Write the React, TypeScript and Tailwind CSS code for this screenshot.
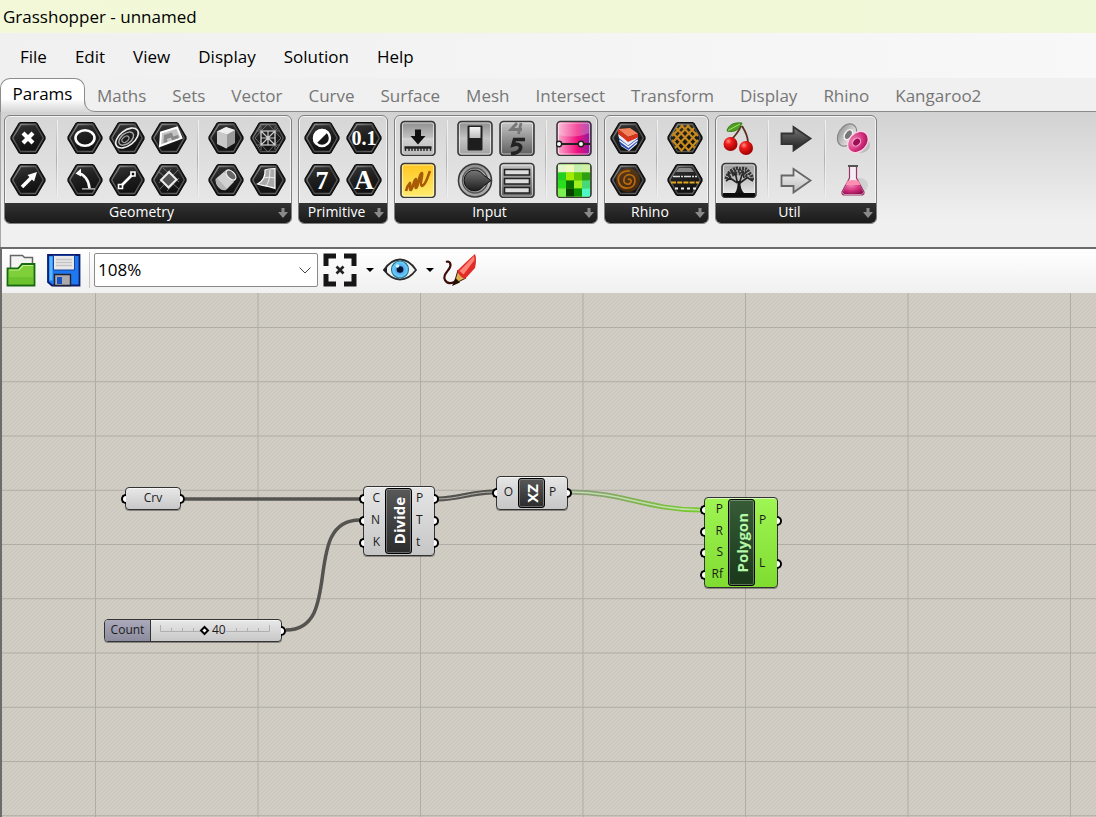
import type { ReactNode } from "react";

const menus = ["File", "Edit", "View", "Display", "Solution", "Help"];

const tabs = [
  "Maths",
  "Sets",
  "Vector",
  "Curve",
  "Surface",
  "Mesh",
  "Intersect",
  "Transform",
  "Display",
  "Rhino",
  "Kangaroo2",
];

/* ---------- icon frames ---------- */

function Svg({ children }: { children: ReactNode }) {
  return (
    <svg viewBox="0 0 36 36" className="block h-9 w-9" aria-hidden="true">
      {children}
    </svg>
  );
}

function Hex({ children }: { children: ReactNode }) {
  return (
    <Svg>
      <path
        d="M10.5 2.5h15L27 3.5l8 13.5v2l-8 13.5-1.500 1h-15L9 32.500 1 19v-2L9 3.500z"
        fill="url(#hexFill)"
        stroke="#0c0c0c"
        strokeWidth="1.2"
      />
      <path
        d="M11 4.500h14.500L33 17.500v1L25.500 31.500h-15L3 18.500v-1z"
        fill="none"
        stroke="url(#hexEdge)"
        strokeWidth="1.3"
      />
      {children}
    </Svg>
  );
}

function Tile({ fill, children }: { fill: string; children: ReactNode }) {
  return (
    <Svg>
      <rect x="1" y="1.500" width="34" height="34" rx="3.500" fill={fill} stroke="#3a3a3a" strokeWidth="1.600" />
      <rect x="2.500" y="3" width="31" height="31" rx="2" fill="none" stroke="#fff" strokeOpacity="0.55" />
      {children}
    </Svg>
  );
}

function SharedPaint() {
  return (
    <svg className="absolute h-0 w-0" aria-hidden="true">
      <defs>
        <linearGradient id="hexFill" x1="0" y1="0" x2="0.300" y2="1">
          <stop offset="0" stopColor="#3c3c3c" />
          <stop offset="0.500" stopColor="#202020" />
          <stop offset="1" stopColor="#101010" />
        </linearGradient>
        <linearGradient id="hexEdge" x1="0" y1="0" x2="1" y2="1">
          <stop offset="0" stopColor="#9a9a9a" />
          <stop offset="0.500" stopColor="#444" />
          <stop offset="1" stopColor="#6a6a6a" />
        </linearGradient>
        <linearGradient id="steel" x1="0" y1="0" x2="0" y2="1">
          <stop offset="0" stopColor="#8c8c8c" />
          <stop offset="0.500" stopColor="#c4c4c4" />
          <stop offset="1" stopColor="#a0a0a0" />
        </linearGradient>
        <linearGradient id="steelDark" x1="0" y1="0" x2="0" y2="1">
          <stop offset="0" stopColor="#c8c8c8" />
          <stop offset="1" stopColor="#5c5c5c" />
        </linearGradient>
        <linearGradient id="amber" x1="0" y1="0" x2="0" y2="1">
          <stop offset="0" stopColor="#ffc61e" />
          <stop offset="1" stopColor="#ffec70" />
        </linearGradient>
        <linearGradient id="pink" x1="0" y1="0" x2="1" y2="0">
          <stop offset="0" stopColor="#fbb0d0" />
          <stop offset="0.600" stopColor="#f0107c" />
          <stop offset="1" stopColor="#8a1aa0" />
        </linearGradient>
        <linearGradient id="pale" x1="0" y1="0" x2="0" y2="1">
          <stop offset="0" stopColor="#f4f4f4" />
          <stop offset="1" stopColor="#bdbdbd" />
        </linearGradient>
        <linearGradient id="mist" x1="0" y1="0" x2="0" y2="1">
          <stop offset="0" stopColor="#9c9c9c" />
          <stop offset="1" stopColor="#f0f0f0" />
        </linearGradient>
        <linearGradient id="dark" x1="0" y1="0" x2="0" y2="1">
          <stop offset="0" stopColor="#777" />
          <stop offset="1" stopColor="#1c1c1c" />
        </linearGradient>
        <radialGradient id="cherry" cx="0.350" cy="0.300" r="0.700">
          <stop offset="0" stopColor="#ff8a80" />
          <stop offset="0.350" stopColor="#ee1c1c" />
          <stop offset="1" stopColor="#a00000" />
        </radialGradient>
        <radialGradient id="magenta" cx="0.400" cy="0.300" r="0.800">
          <stop offset="0" stopColor="#f48ab8" />
          <stop offset="0.600" stopColor="#cf2a78" />
          <stop offset="1" stopColor="#8c1050" />
        </radialGradient>
        <radialGradient id="sky">
          <stop offset="0" stopColor="#1b4fc0" />
          <stop offset="0.500" stopColor="#5aaef4" />
          <stop offset="1" stopColor="#6fdcf4" />
        </radialGradient>
      </defs>
    </svg>
  );
}

/* ---------- ribbon icons ---------- */

const geometry = {
  point: (
    <Hex>
      <path d="m13 13 10 10m0-10-10 10" stroke="#fff" strokeWidth="4.200" />
    </Hex>
  ),
  vector: (
    <Hex>
      <path d="m12 25 10-10" stroke="#fff" strokeWidth="3.600" />
      <path d="m27 10-3 9.500L17.500 13z" fill="#fff" />
    </Hex>
  ),
  circle: (
    <Hex>
      <ellipse cx="18" cy="18" rx="9.500" ry="7.800" fill="none" stroke="#fff" strokeWidth="2.600" />
    </Hex>
  ),
  ellipse: (
    <Hex>
      <g fill="none" stroke="#ddd" transform="rotate(-38 18 18)">
        <ellipse cx="18" cy="18" rx="13" ry="7.500" stroke="#eee" strokeWidth="1.600" />
        <ellipse cx="17" cy="18" rx="8.500" ry="5" stroke="#aaa" strokeWidth="1.500" />
        <ellipse cx="16" cy="18" rx="4" ry="2.500" stroke="#999" strokeWidth="1.300" />
      </g>
    </Hex>
  ),
  surface: (
    <Hex>
      <path d="M10 12.500 26 7.500 30.500 18 9 26z" fill="#c4c4c4" stroke="#fff" strokeWidth="2" />
      <path d="m13 15 8-2.500 1 4 5-1.500 1 3-7 2.500-1-3-4 1.500.500 3-4 1z" fill="#888" />
    </Hex>
  ),
  arc: (
    <Hex>
      <path d="M11 11c6 1 11 7 11.500 15.500" fill="none" stroke="#fff" strokeWidth="2.600" />
      <path d="m8.500 11.500 5.500-5v8z" fill="#fff" />
      <path d="M15 26.800h13" stroke="#ccc" strokeWidth="1.200" />
    </Hex>
  ),
  line: (
    <Hex>
      <path d="m12 24 12-12" stroke="#fff" strokeWidth="2.600" />
      <path d="M9.500 22.500h4v4h-4zM22 10h4v4h-4z" fill="#111" stroke="#fff" strokeWidth="1.600" />
    </Hex>
  ),
  plane: (
    <Hex>
      <path d="m8 10 20 17M27 8 9 27M12 6l16 14M8 21 20 7M16 29l12-13" stroke="#777" strokeWidth="0.900" />
      <path d="m18 10 7.500 7.500-8 8L10 18z" fill="#555" stroke="#eee" strokeWidth="2" />
    </Hex>
  ),
  box: (
    <Hex>
      <path d="M9 11.500 18 7l9 3v13l-9 5.500-9-5z" fill="#999" />
      <path d="M9 11.500 18 7l9 3-8 4.500z" fill="#eee" />
      <path d="M9 11.500 19 14.500v14L9 24z" fill="#c8c8c8" />
    </Hex>
  ),
  mesh: (
    <Hex>
      <path
        d="M11 6v24M25 6v24M6 11h24M6 25h24M8 8l20 20M28 8 8 28M18 4l-7 7-6 7 13 14 13-14z"
        stroke="#777"
        strokeWidth="0.900"
        fill="none"
      />
      <path d="M11 11h14v14H11zM18 11v14M11 18h14M11 11l14 14M25 11 11 25" stroke="#ccc" strokeWidth="1.200" fill="none" />
    </Hex>
  ),
  brep: (
    <Hex>
      <path d="M7.500 17 18 8q3-2 6 1 5 4 4 8L18 28q-4 1-7-2-4-4-3.500-9z" fill="#b4b4b4" />
      <path d="m9 16 7-6 10 10-7 7z" fill="#e4e4e4" fillOpacity="0.600" />
      <ellipse cx="23" cy="13" rx="3.500" ry="6" transform="rotate(-45 23 13)" fill="#666" stroke="#eee" strokeWidth="1.200" />
    </Hex>
  ),
  twisted: (
    <Hex>
      <path d="M15 8c2-1 6-1.500 10-1.500v20c-5-2-12-2.500-17.500-4.500 6-3 8-7 7.500-14z" fill="#aaa" stroke="#fff" strokeWidth="1.200" />
      <path d="M20 8c0 7-1 12-4 16M13 16c4-1 8-1 12 0" stroke="#eee" fill="none" />
    </Hex>
  ),
};

function Glyph({ children, size }: { children: string; size: number }) {
  return (
    <Hex>
      <text
        x="18"
        y={18 + size * 0.34}
        textAnchor="middle"
        fontSize={size}
        fill="#fff"
        className="font-['Liberation_Serif',serif] font-bold"
      >
        {children}
      </text>
    </Hex>
  );
}

const booleanIcon = (
  <Hex>
    <circle cx="18" cy="18" r="8" fill="#161616" stroke="#fff" strokeWidth="2.400" />
    <path d="M11.500 24.500A9 9 0 1 1 24.500 11.500z" fill="#fff" />
  </Hex>
);

const slider = (
  <Tile fill="url(#steel)">
    <path d="M2.500 18h31v15h-31z" fill="#fff" fillOpacity="0.250" />
    <path d="M15 9.500h6V16h4.500L18 24.500 10.500 16H15z" fill="#111" />
    <path d="M5.500 27v4M9 27v4m3-4v4m3-4v4m3-4v4m3-4v4m3-4v4m3-4v4m3.500-4v4" stroke="#222" strokeWidth="1.400" fill="none" />
    <path d="M4.500 27.500h27" stroke="#222" strokeWidth="2.400" />
  </Tile>
);

const graph = (
  <Tile fill="url(#amber)">
    <path
      d="M6 29c1-4 2-6 4-8 1 4-1 7 1 7 3-3 2-10 5-11 1 2-2 8 0 9 3-1 2-13 6-15 1 3-3 12 0 13 4-1 5-8 8-15"
      fill="none"
      stroke="#a85a06"
      strokeWidth="2.600"
      strokeLinejoin="round"
    />
  </Tile>
);

const toggle = (
  <Tile fill="url(#steel)">
    <path d="M11 6h14v24H11z" fill="#1d1d1d" stroke="#222" />
    <path d="M12.500 7h11v11h-11z" fill="url(#pale)" />
  </Tile>
);

const digits = (
  <Tile fill="url(#steelDark)">
    <path d="m22 3-2.500 11M23 9.500H12L18 3" fill="none" stroke="#777" strokeWidth="2.800" />
    <path d="M26 19.500H15.500L14 25c6-2 9 1 7 4.500-1.500 3-4 4-9 4" fill="none" stroke="#222" strokeWidth="3.600" />
  </Tile>
);

const knob = (
  <Svg>
    <circle cx="18" cy="18.500" r="16.500" fill="url(#steel)" stroke="#3a3a3a" strokeWidth="1.600" />
    <circle cx="18" cy="18.500" r="12.500" fill="#aaa" stroke="#555" strokeWidth="1.400" />
    <path d="M26.500 13 34 18.500 26.500 24A10.500 10.500 0 1 1 26.500 13z" fill="url(#dark)" stroke="#111" />
  </Svg>
);

const valueList = (
  <Tile fill="url(#steelDark)">
    <path d="M5.500 7.500h25v5.500h-25zM5.500 16.500h25V22h-25zM5.500 25.500h25V31h-25z" fill="#ddd" stroke="#222" strokeWidth="1.600" />
  </Tile>
);

const gradient = (
  <Tile fill="url(#pink)">
    <path d="M2.500 3h31v10q-15 6-31 2z" fill="#fff" fillOpacity="0.250" />
    <path d="M2 24h32" stroke="#222" strokeWidth="1.800" />
    <circle cx="3" cy="24" r="2.700" fill="#fff" stroke="#222" strokeWidth="1.500" />
    <circle cx="25" cy="24" r="2.700" fill="#fff" stroke="#222" strokeWidth="1.500" />
  </Tile>
);

const swatchColors = [
  "#e4f5cc", "#f0f8c0", "#c4efb0", "#d0f0a8",
  "#22cf22", "#a4ea00", "#5fc800", "#2ca010",
  "#28e020", "#087000", "#a0f020", "#48d878",
  "#7cf050", "#084000", "#0c9000", "#50f8c8",
];

const swatch = (
  <Tile fill="#4c0">
    {swatchColors.map((color, i) => (
      <rect key={i} x={2 + (i % 4) * 8} y={2.5 + Math.floor(i / 4) * 8} width="8" height="8" fill={color} />
    ))}
  </Tile>
);

const layers = (
  <Hex>
    <path d="m8 14 3 12 8 5 8-7 1-8-9 5z" fill="#e8ecf8" />
    <path d="m9 18 9 7.500L28 18l-.5 4L18.500 30 10 24.500z" fill="#2a50b8" />
    <path d="m9.500 20.500 9 6.500 9-7" stroke="#f4f4fc" strokeWidth="1.500" fill="none" />
    <path d="m8 9 12-1 8 5.500-10 3.500z" fill="#f4825c" />
    <path d="m8 9 10 8 10-3.500v4L18 22 8 13.500z" fill="#d8341c" />
  </Hex>
);

const hatch = (
  <Hex>
    <path
      d="M9 8 28 28M14 5l16 17M20 5l11 11M6 13l16 18M5 20l10 11M27 8 8 28M22 5 6 22M16 5 5 16M30 13 14 31M31 20 21 31"
      stroke="#c88a1c"
      strokeWidth="2"
    />
  </Hex>
);

const spiral = (
  <Hex>
    <circle cx="18" cy="18" r="12" fill="#8a4a08" fillOpacity="0.450" />
    <path
      d="M18 18c1-2 4 0 3 2-2 4-8 2-7-3 1-6 11-6 11 2 0 8-12 10-16 2-3-8 4-13 11-12"
      fill="none"
      stroke="#b8690e"
      strokeWidth="1.700"
    />
  </Hex>
);

const linetypes = (
  <Hex>
    <path d="m10 8 2-2h12l3 4H9z" fill="#888" />
    <path d="M6 14.500h24" stroke="#ddd" strokeWidth="1.400" strokeDasharray="7 1 2 1" />
    <path d="M4 20.500h28" stroke="#e0a820" strokeWidth="2" strokeDasharray="5 1.200" />
    <path d="M8 26.500h21" stroke="#eee" strokeWidth="1.800" strokeDasharray="3 3" />
  </Hex>
);

const cherries = (
  <Svg>
    <path d="M10 20c4-4 8-9 10-14M27 23c0-8-3-12-6-17" fill="none" stroke="#5a3020" strokeWidth="1.800" />
    <path d="M6 11C7 5 13 2 21 3c-2 6-7 10-15 8z" fill="#4f9f22" stroke="#2c6c10" strokeWidth="0.800" />
    <path d="M7 10.500 19 4" stroke="#b0e070" />
    <circle cx="9.500" cy="24" r="7" fill="url(#cherry)" />
    <circle cx="25" cy="28" r="7" fill="url(#cherry)" />
  </Svg>
);

const tree = (
  <Tile fill="url(#mist)">
    <path d="M2 31h32v2.500q0 1.500-2 1.500H4q-2 0-2-1.500z" fill="#0c0c0c" />
    <path
      d="M16.500 21 9 16m7.500 5L14 10m4 12 4-12m-3 11 8-6M9 16l-4 3m4-3-2-5m7 2-4-5m13 4 5-4m-1 8 5 3m-9-3-1-7"
      fill="none"
      stroke="#222"
      strokeWidth="1.600"
    />
    <path d="M14 31q3-4 2.500-12h3q-.5 8 3.500 12z" fill="#161616" />
    <path
      d="M5 17q2-6 5-8 5-4 9-2 7-2 9 4 4 3 3 8"
      fill="none"
      stroke="#333"
      strokeWidth="3.500"
      strokeDasharray="2 1"
    />
    <path d="M8 15q9-7 20 0M10 11q7-4 15 0" fill="none" stroke="#333" strokeWidth="3.500" strokeDasharray="2 1.500" />
  </Tile>
);

function Arrow({ fill, stroke }: { fill: string; stroke: string }) {
  return (
    <Svg>
      <path d="M3.500 13.500h12V7l17 11.500-17 12V24h-12z" fill={fill} stroke={stroke} strokeWidth="1.800" />
    </Svg>
  );
}

const clusters = (
  <Svg>
    <ellipse cx="25" cy="25" rx="10" ry="8" fill="#000" fillOpacity="0.150" />
    <g transform="rotate(-58 12 15)">
      <ellipse cx="12" cy="15" rx="12" ry="8.500" fill="url(#mist)" stroke="#888" strokeWidth="1.200" />
      <ellipse cx="13" cy="16" rx="5.500" ry="3.500" fill="#777" stroke="#f4f4f4" strokeWidth="1.500" />
    </g>
    <g transform="rotate(-48 23 22)">
      <ellipse cx="23" cy="22" rx="12" ry="9" fill="url(#magenta)" stroke="#f8d4e4" strokeWidth="1.500" />
      <ellipse cx="22" cy="21" rx="4.500" ry="3.500" fill="#9c1058" stroke="#f49cc4" strokeWidth="1.200" />
    </g>
  </Svg>
);

const flask = (
  <Svg>
    <ellipse cx="25" cy="23" rx="8" ry="7" fill="#888" fillOpacity="0.200" />
    <path d="M14.500 4.500v11.500L7 30q-.5 3 3 3h16q3.500 0 3-3l-7.500-14v-11.500z" fill="#f4eef2" stroke="#9a3468" strokeWidth="1.200" />
    <path d="M13 19h10l5 10.500q.5 2.500-2 2.500H10q-2.500 0-2-2.500z" fill="url(#magenta)" />
    <path d="M12.500 19q5.500-2 11 0l2 4h-15z" fill="#ff8fb0" />
    <path d="M13 4h10" stroke="#555" strokeWidth="1.800" />
  </Svg>
);

/* ---------- ribbon ---------- */

type Tool = { name: string; icon: ReactNode };

// Each inner list is a block of tools between two separators, column by column.
const groups: { title: string; blocks: Tool[][] }[] = [
  {
    title: "Geometry",
    blocks: [
      [
        { name: "Point", icon: geometry.point },
        { name: "Vector", icon: geometry.vector },
      ],
      [
        { name: "Circle", icon: geometry.circle },
        { name: "Circular Arc", icon: geometry.arc },
        { name: "Curve", icon: geometry.ellipse },
        { name: "Line", icon: geometry.line },
        { name: "Surface", icon: geometry.surface },
        { name: "Plane", icon: geometry.plane },
      ],
      [
        { name: "Box", icon: geometry.box },
        { name: "Brep", icon: geometry.brep },
        { name: "Mesh", icon: geometry.mesh },
        { name: "Twisted Box", icon: geometry.twisted },
      ],
    ],
  },
  {
    title: "Primitive",
    blocks: [
      [
        { name: "Boolean", icon: booleanIcon },
        { name: "Integer", icon: <Glyph size={26}>7</Glyph> },
        { name: "Number", icon: <Glyph size={20}>0.1</Glyph> },
        { name: "Text", icon: <Glyph size={27}>A</Glyph> },
      ],
    ],
  },
  {
    title: "Input",
    blocks: [
      [
        { name: "Number Slider", icon: slider },
        { name: "Graph Mapper", icon: graph },
      ],
      [
        { name: "Boolean Toggle", icon: toggle },
        { name: "Control Knob", icon: knob },
        { name: "Digit Scroller", icon: digits },
        { name: "Value List", icon: valueList },
      ],
      [
        { name: "Gradient", icon: gradient },
        { name: "Colour Swatch", icon: swatch },
      ],
    ],
  },
  {
    title: "Rhino",
    blocks: [
      [
        { name: "Layer", icon: layers },
        { name: "Material", icon: spiral },
      ],
      [
        { name: "Hatch Pattern", icon: hatch },
        { name: "Linetype", icon: linetypes },
      ],
    ],
  },
  {
    title: "Util",
    blocks: [
      [
        { name: "Cherry Picker", icon: cherries },
        { name: "Param Viewer", icon: tree },
      ],
      [
        { name: "Data Output", icon: <Arrow fill="url(#dark)" stroke="#333" /> },
        { name: "Data Input", icon: <Arrow fill="url(#pale)" stroke="#666" /> },
      ],
      [
        { name: "Cluster", icon: clusters },
        { name: "Galapagos", icon: flask },
      ],
    ],
  },
];

function RibbonGroup({ title, blocks }: { title: string; blocks: Tool[][] }) {
  return (
    <section className="overflow-hidden rounded-md border border-[#808080] bg-linear-to-b from-[#d6d6d6] to-[#ebebeb] shadow-[inset_0_0_0_1px_#f4f4f4]">
      <div className="flex gap-[10px] px-[5px] pt-1 pb-[5px]">
        {blocks.map((block, i) => (
          <div key={i} className="flex gap-[10px]">
            {i > 0 && <span className="w-px bg-linear-to-b from-[#d8d8d8] via-[#b0b0b0] to-[#e4e4e4] shadow-[1px_0_0_#efefef]" />}
            <div className="grid grid-flow-col grid-rows-2 gap-[6px]">
              {block.map((tool) => (
                <button key={tool.name} type="button" aria-label={tool.name} className="h-9 w-9">
                  {tool.icon}
                </button>
              ))}
            </div>
          </div>
        ))}
      </div>
      <button
        type="button"
        className="flex h-5 w-full items-center bg-linear-to-b from-[#333] to-[#1a1a1a] pr-[3px] text-[14px] leading-5 text-white"
      >
        <span className="flex-1 pb-[3px]">{title}</span>
        <svg viewBox="0 0 10 12" className="h-3 w-[10px]" aria-hidden="true">
          <path d="M3.500 1h3v4H10L5 11 0 5h3.500z" fill="#8a8a8a" />
        </svg>
      </button>
    </section>
  );
}

/* ---------- toolbar icons ---------- */

const openIcon = (
  <svg viewBox="0 0 34 36" className="h-9 w-[34px]" aria-hidden="true">
    <path d="M5.500 18V3.500h12l2 2h8V16" fill="#f4f4f4" stroke="#666" strokeWidth="1.500" />
    <path d="M2.500 33.500v-17H13l4-4.500h12.500v21.500z" fill="#7fcf3a" stroke="#186a10" strokeWidth="1.800" />
    <path d="M4 18h10l4-4.500h10" fill="none" stroke="#c4f090" strokeWidth="1.200" />
    <path d="M4 25h24v7H4z" fill="#5cb820" fillOpacity="0.500" />
  </svg>
);

const saveIcon = (
  <svg viewBox="0 0 36 36" className="h-9 w-9" aria-hidden="true">
    <path d="M2 3h31.500v30.500H6L2 30z" fill="#1e78f0" stroke="#0c1c6c" strokeWidth="1.800" />
    <path d="M3.500 4.500h3v24h-3z" fill="#58b8ff" />
    <path d="M7.500 3.500h21V18h-21z" fill="#e8e8e8" stroke="#18409c" />
    <path d="M10 7.500h16M10 10.500h16M10 13.500h16" stroke="#c4c4c4" strokeWidth="1.400" />
    <path d="M8.500 22.500h16v11h-16z" fill="#aaa" stroke="#223" strokeWidth="1.400" />
    <path d="M11 25h5v7h-5z" fill="#1450c8" />
  </svg>
);

const extentsIcon = (
  <svg viewBox="0 0 36 36" className="h-9 w-9" aria-hidden="true">
    <path d="M4 14V4h10M22 4h10v10M32 22v10H22M14 32H4V22" fill="none" stroke="#161616" strokeWidth="5" />
    <path d="m14.500 14.500 7 7m0-7-7 7" stroke="#222" strokeWidth="2.600" />
  </svg>
);

const eyeIcon = (
  <svg viewBox="0 0 36 36" className="h-9 w-9" aria-hidden="true">
    <path d="M2 18q7-10.500 16-10.500T34 18q-7 9.500-16 9.500T2 18z" fill="#f4f4f4" stroke="#2c2c2c" strokeWidth="1.800" />
    <circle cx="18" cy="17.500" r="8.500" fill="url(#sky)" stroke="#22769c" strokeWidth="1.200" />
    <circle cx="18" cy="17.500" r="3.300" fill="#081430" />
    <circle cx="15.500" cy="14" r="1.800" fill="#d8f4ff" />
    <path d="M1 18 5 15v6z" fill="#222" />
  </svg>
);

const sketchIcon = (
  <svg viewBox="0 0 36 36" className="h-9 w-9" aria-hidden="true">
    <path d="M4 10c4-2 6 3 3 7s-6 7-4 11 7 4 11 1" fill="none" stroke="#3c0c0c" strokeWidth="2.200" />
    <path d="m12 32 4-14 8 8z" fill="#e0b050" stroke="#3c1c0c" />
    <path d="m10 34 3.500-8 4.500 4.500z" fill="#210" />
    <path d="M15 19Q25 9 33 2q2 5 0 14l-10 11q-5-2-8-8z" fill="#e02c28" />
    <path d="M17.500 19 32 4l.5 4-11 14.500z" fill="#ff8478" />
  </svg>
);

function DropArrow({ label }: { label: string }) {
  return (
    <button type="button" aria-label={label} className="flex h-9 w-6 items-center justify-center">
      <svg viewBox="0 0 8 4" className="h-1 w-2" aria-hidden="true">
        <path d="M0 0h8L4 4z" />
      </svg>
    </button>
  );
}

/* ---------- canvas ---------- */

const nodeFrame =
  "absolute flex rounded-[4px] border border-[#333] text-[12px] text-[#1c1c1c] shadow-[inset_0_1px_0_#ffffff99,0_1px_0_#00000059]";

function Port({ side }: { side: "left" | "right" }) {
  return (
    <span
      className={
        side === "left"
          ? "absolute top-1/2 -left-[5px] h-[10px] w-[5px] -translate-y-1/2 rounded-l-full border-2 border-r-0 border-black bg-white"
          : "absolute top-1/2 -right-[5px] h-[10px] w-[5px] -translate-y-1/2 rounded-r-full border-2 border-l-0 border-black bg-white"
      }
    />
  );
}

function PortColumn({ side, names }: { side: "left" | "right"; names: string[] }) {
  return (
    <div className={`flex flex-col py-px ${side === "left" ? "flex-1" : "w-[22px]"}`}>
      {names.map((name) => (
        <div
          key={name}
          className={`relative flex flex-1 items-center pb-[2px] leading-4 ${side === "left" ? "justify-end pr-[5px]" : "pl-1"}`}
        >
          <Port side={side} />
          {name}
        </div>
      ))}
    </div>
  );
}

type ComponentNodeProps = {
  name: string;
  inputs: string[];
  outputs: string[];
  place: string;
  selected?: boolean;
};

function ComponentNode({ name, inputs, outputs, place, selected }: ComponentNodeProps) {
  return (
    <div
      className={`${nodeFrame} ${place} ${
        selected ? "bg-linear-to-b from-[#9ff552] to-[#80dc30]" : "bg-linear-to-b from-[#e6e6e6] to-[#c6c6c6]"
      }`}
    >
      <PortColumn side="left" names={inputs} />
      <div
        className={`my-px flex w-[27px] items-center justify-center rounded-[3px] border border-black bg-linear-to-b shadow-[inset_0_0_0_1px_#ffffff4d] ${
          selected ? "from-[#365c36] to-[#1a381a] text-[#b4f8a8]" : "from-[#585858] to-[#2c2c2c] text-white"
        }`}
      >
        <span className="rotate-180 text-[15px] leading-4 font-bold [writing-mode:vertical-rl]">{name}</span>
      </div>
      <PortColumn side="right" names={outputs} />
    </div>
  );
}

function CanvasBackdrop() {
  return (
    <svg className="absolute inset-0 h-full w-full" aria-hidden="true">
      <defs>
        <pattern id="weave" width="4" height="4" patternUnits="userSpaceOnUse">
          <rect width="4" height="4" fill="#d4d0c8" />
          <path d="M-1 1 1-1M0 4 4 0M3 5 5 3" stroke="#cac7bd" strokeWidth="1.400" />
        </pattern>
        <pattern id="grid" x="93" y="34" width="162.500" height="54.250" patternUnits="userSpaceOnUse">
          <path d="M0.500 0v54.250M0 0.500h162.500" stroke="#000" strokeOpacity="0.150" />
        </pattern>
        <linearGradient id="wireFade" gradientUnits="userSpaceOnUse" x1="569" y1="0" x2="698" y2="0">
          <stop offset="0" stopColor="#8c9a80" />
          <stop offset="1" stopColor="#74cc28" />
        </linearGradient>
      </defs>
      <rect width="100%" height="100%" fill="url(#weave)" />
      <rect width="100%" height="100%" fill="url(#grid)" />
      <g fill="none" stroke="#55534f" strokeWidth="3.500">
        <path d="M183 206h175" />
        <path d="M284 337C343 337 298 227 358 227" />
        <path d="M436 206C456 206 470 199 491 199" strokeWidth="5" />
        <path d="M436 206C456 206 470 199 491 199" stroke="#b4b2ac" strokeWidth="1" />
      </g>
      <g fill="none">
        <path d="M569 199C620 199 645 217 699 217" stroke="url(#wireFade)" strokeWidth="5" />
        <path d="M569 199C620 199 645 217 699 217" stroke="#c4dcb0" strokeWidth="1.500" />
      </g>
    </svg>
  );
}

export default function App() {
  return (
    <div className="flex min-h-screen flex-col bg-[#f0f0f0] font-['Open_Sans','Noto_Sans',sans-serif] text-black">
      <SharedPaint />

      {/* Title bar */}
      <header className="h-[33px] bg-linear-to-r from-[#f2f8d8] to-[#eff8d8] pl-[3px] text-[17px] leading-[33px]">
        <h1>Grasshopper - unnamed</h1>
      </header>

      {/* Menu */}
      <nav className="flex h-[45px] items-center gap-7 bg-linear-to-r from-[#f0f0f0] to-[#f8f8f8] pt-[2px] pl-5 text-[17px]">
        {menus.map((menu) => (
          <button key={menu} type="button">
            {menu}
          </button>
        ))}
      </nav>

      {/* Ribbon tabs */}
      <div role="tablist" className="flex h-[34px] text-[17px] text-[#767676]">
        <button
          type="button"
          role="tab"
          aria-selected="true"
          className="relative w-[85px] shrink-0 rounded-t-[10px] border border-b-0 border-[#8c8c8c] bg-linear-to-b from-white from-60% to-[#d6d6d6] pb-[3px] text-black"
        >
          Params
          <svg viewBox="0 0 11 12" className="absolute -right-[11px] bottom-0 h-3 w-[11px]" aria-hidden="true">
            <path d="M0 0Q1 11.500 11 11.500V12H0z" fill="#dcdcdc" />
            <path d="M0.500 0Q1 11.500 11 11.500" fill="none" stroke="#8c8c8c" />
          </svg>
        </button>
        <div className="ml-[10px] flex flex-1 items-center gap-[26px] border-b border-[#8c8c8c] pt-[2px] pl-[2px]">
          {tabs.map((tab) => (
            <button key={tab} type="button" role="tab" aria-selected="false">
              {tab}
            </button>
          ))}
        </div>
      </div>

      {/* Ribbon */}
      <div className="flex items-start gap-[6px] border-l border-[#a8a8a8] bg-linear-to-b from-[#d2d2d2] to-[#f0f0f0] to-80% px-[3px] pt-[3px] pb-[23px]">
        {groups.map((group) => (
          <RibbonGroup key={group.title} {...group} />
        ))}
      </div>

      <main className="flex flex-1 flex-col border-t-2 border-l-2 border-[#6c6c6c]">
        {/* Canvas toolbar */}
        <div className="flex h-11 items-center bg-linear-to-b from-white to-[#f0f0f0] pb-[2px] pl-[3px]">
          <button type="button" aria-label="Open">
            {openIcon}
          </button>
          <button type="button" aria-label="Save" className="ml-[7px]">
            {saveIcon}
          </button>
          <span className="mr-1 ml-[7px] h-9 w-px bg-[#c4c4c4]" />
          <div className="relative">
            <select
              aria-label="Zoom"
              className="h-[34px] w-56 appearance-none rounded-[2px] border border-[#8a8a8a] bg-white pl-[3px] text-[17px]"
            >
              <option>108%</option>
            </select>
            <svg viewBox="0 0 12 7" className="pointer-events-none absolute top-[14px] right-[7px] h-[7px] w-3" aria-hidden="true">
              <path d="m.500.500 5.500 5.500L11.500.500" fill="none" stroke="#444" />
            </svg>
          </div>
          <button type="button" aria-label="Zoom extents" className="ml-1">
            {extentsIcon}
          </button>
          <DropArrow label="Named views" />
          <button type="button" aria-label="Preview">
            {eyeIcon}
          </button>
          <DropArrow label="Preview settings" />
          <button type="button" aria-label="Sketch">
            {sketchIcon}
          </button>
        </div>

        {/* Canvas */}
        <div className="relative flex-1 overflow-hidden">
          <CanvasBackdrop />

          <div
            className={`${nodeFrame} top-[194px] left-[123px] h-[23px] w-14 items-center justify-center bg-linear-to-b from-[#e8e8e8] to-[#c8c8c8] pb-[2px]`}
          >
            <Port side="left" />
            Crv
            <Port side="right" />
          </div>

          <div
            className={`${nodeFrame} top-[326px] left-[102px] h-[23px] w-[178px] bg-linear-to-b from-[#e8e8e8] to-[#c8c8c8]`}
          >
            <label
              htmlFor="count"
              className="w-[46px] rounded-l-[3px] border-r border-[#333] bg-linear-to-b from-[#aaaabb] to-[#8c8c9e] text-center leading-[19px]"
            >
              Count
            </label>
            <div className="relative flex-1">
              <svg viewBox="0 0 130 21" className="absolute top-0 left-0 h-[21px] w-[130px]" aria-hidden="true">
                <path
                  d="M9.500 5v6.500H51M75 11.500h43.500V5M20.500 8v3M31.500 8v3M42.500 8v3M85.500 8v3M96.500 8v3M107.500 8v3"
                  fill="none"
                  stroke="#b0b0b0"
                />
              </svg>
              <input
                id="count"
                type="range"
                min={0}
                max={100}
                defaultValue={40}
                className="absolute top-[5px] left-[6px] h-[10px] w-[116px] appearance-none bg-transparent [&::-webkit-slider-thumb]:h-[7px] [&::-webkit-slider-thumb]:w-[7px] [&::-webkit-slider-thumb]:rotate-45 [&::-webkit-slider-thumb]:appearance-none [&::-webkit-slider-thumb]:border-2 [&::-webkit-slider-thumb]:border-black [&::-webkit-slider-thumb]:bg-white"
              />
              <output htmlFor="count" className="absolute top-0 left-[61px] leading-[19px]">
                40
              </output>
            </div>
            <Port side="right" />
          </div>

          <ComponentNode
            name="Divide"
            inputs={["C", "N", "K"]}
            outputs={["P", "T", "t"]}
            place="top-[193px] left-[361px] h-[70px] w-[72px]"
          />
          <ComponentNode
            name="XZ"
            inputs={["O"]}
            outputs={["P"]}
            place="top-[183px] left-[494px] h-[34px] w-[72px]"
          />
          <ComponentNode
            name="Polygon"
            inputs={["P", "R", "S", "Rf"]}
            outputs={["P", "L"]}
            place="top-[204px] left-[702px] h-[91px] w-[74px]"
            selected
          />
        </div>
      </main>
    </div>
  );
}
